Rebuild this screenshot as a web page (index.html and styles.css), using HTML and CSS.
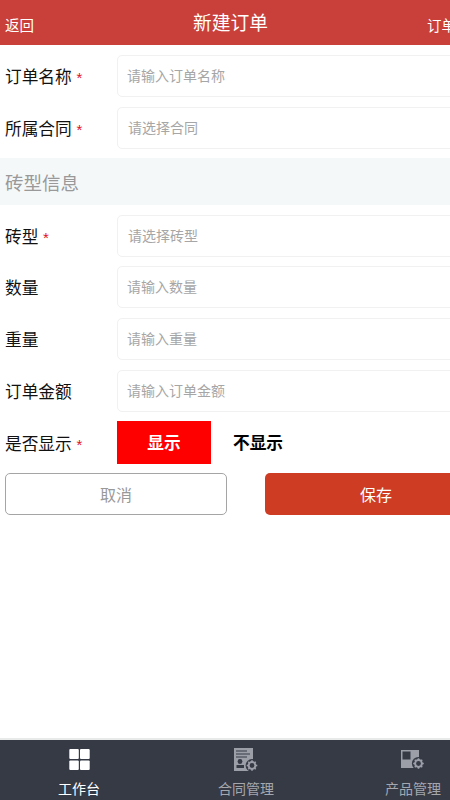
FILE: index.html
```html
<!DOCTYPE html>
<html lang="zh-CN">
<head>
    <meta charset="UTF-8">
    <meta name="viewport" content="width=device-width, initial-scale=1.0">
    <title>新建订单</title>
    <link rel="stylesheet" href="styles.css">
</head>
<body>
    <div class="page">
        <div class="header">
            <a class="back" href="#">返回</a>
            <div class="title">新建订单</div>
            <a class="orders" href="#">订单列表</a>
        </div>

        <div class="form">
            <div class="form-group">
                <label>订单名称 <span class="star">*</span></label>
                <input type="text" placeholder="请输入订单名称">
            </div>
            <div class="form-group select">
                <label>所属合同 <span class="star">*</span></label>
                <input type="text" placeholder="请选择合同">
            </div>

            <div class="section">砖型信息</div>

            <div class="form-group select">
                <label>砖型 <span class="star">*</span></label>
                <input type="text" placeholder="请选择砖型">
            </div>
            <div class="form-group tight">
                <label>数量</label>
                <input type="text" placeholder="请输入数量">
            </div>
            <div class="form-group">
                <label>重量</label>
                <input type="text" placeholder="请输入重量">
            </div>
            <div class="form-group">
                <label>订单金额</label>
                <input type="text" placeholder="请输入订单金额">
            </div>

            <div class="form-group toggle-row">
                <label>是否显示 <span class="star">*</span></label>
                <div class="toggle on">显示</div>
                <div class="toggle">不显示</div>
            </div>

            <div class="buttons">
                <button class="cancel">取消</button>
                <button class="save">保存</button>
            </div>
        </div>

        <div class="nav">
            <div class="nav-item active">
                <svg class="nav-icon" width="22" height="24" viewBox="0 0 22 24">
                    <rect x="1.3" y="1" width="9.5" height="10" rx="1" fill="#fff"/>
                    <rect x="12" y="1" width="9.7" height="10" rx="1" fill="#fff"/>
                    <rect x="1.3" y="12.5" width="9.5" height="9.5" rx="1" fill="#fff"/>
                    <rect x="12" y="12.5" width="9.7" height="9.5" rx="1" fill="#fff"/>
                </svg>
                <span>工作台</span>
            </div>
            <div class="nav-item">
                <svg class="nav-icon" width="24" height="24" viewBox="0 0 24 24">
                    <rect x="0" y="0" width="19" height="23" fill="#9c9ea8"/>
                    <path d="M2 3h11M2 6h14M2 9h11" stroke="#353a45" stroke-width="1.2"/>
                    <circle cx="6" cy="13.5" r="2.4" fill="#353a45"/>
                    <rect x="2.5" y="17" width="7.5" height="3" fill="#353a45"/>
                    <circle cx="18" cy="17.5" r="6.4" fill="#353a45"/>
                    <circle cx="18" cy="17.5" r="3.4" fill="none" stroke="#9c9ea8" stroke-width="2"/>
                    <path d="M18 12.2v2M18 20.8v2M12.7 17.5h2M21.3 17.5h2M14.3 13.8l1.4 1.4M20.3 19.8l1.4 1.4M14.3 21.2l1.4-1.4M20.3 15.2l1.4-1.4" stroke="#9c9ea8" stroke-width="1.6"/>
                </svg>
                <span>合同管理</span>
            </div>
            <div class="nav-item">
                <svg class="nav-icon" width="24" height="24" viewBox="0 0 24 24">
                    <rect x="0" y="2" width="18" height="18" fill="#9c9ea8"/>
                    <rect x="1.5" y="3.5" width="8" height="8" fill="#353a45"/>
                    <circle cx="17.5" cy="15.5" r="6.6" fill="#353a45"/>
                    <circle cx="17.5" cy="15.5" r="3.4" fill="none" stroke="#9c9ea8" stroke-width="2"/>
                    <path d="M17.5 10.2v2M17.5 18.8v2M12.2 15.5h2M20.8 15.5h2M13.8 11.8l1.4 1.4M19.8 17.8l1.4 1.4M13.8 19.2l1.4-1.4M19.8 13.2l1.4-1.4" stroke="#9c9ea8" stroke-width="1.6"/>
                </svg>
                <span>产品管理</span>
            </div>
        </div>
    </div>
</body>
</html>
```

FILE: styles.css
```css
html, body {
    margin: 0;
    height: 100%;
    overflow: hidden;
    background: #fff;
}
body {
    font-family: "Liberation Sans", "Noto Sans CJK SC", sans-serif;
}
.page {
    width: 450px;
    height: 800px;
    display: flex;
    flex-direction: column;
    overflow: hidden;
}
.header {
    flex: none;
    height: 45px;
    display: flex;
    align-items: center;
    padding-left: 5px;
    background: #c9403a;
    color: #fff;
    white-space: nowrap;
}
.header a {
    color: #fff;
    text-decoration: none;
    font-size: 14.5px;
    padding-top: 3px;
    flex: none;
}
.back {
    width: 188px;
}
.title {
    flex: none;
    width: 75px;
    font-size: 18.75px;
    margin-bottom: 3px;
}
.orders {
    margin-left: 159px;
}
.form {
    flex: 1;
    width: 480px;
}
.form-group {
    display: flex;
    align-items: center;
    height: 42px;
    margin-top: 10px;
    padding-left: 5px;
}
.form-group.tight {
    margin-top: 9px;
}
.form-group label {
    flex: none;
    width: 112px;
    font-size: 16.7px;
    color: #111;
}
.star {
    color: #e0101f;
    font-size: 15px;
}
.form-group input {
    flex: 1;
    min-width: 0;
    height: 42px;
    padding: 0 9px;
    border: 1px solid #f1f1f1;
    border-radius: 5px;
    box-sizing: border-box;
    font-family: inherit;
    font-size: 14px;
    outline: none;
}
.form-group.select input {
    padding-left: 10px;
}
.form-group input::placeholder {
    color: #a6a6a6;
}
.section {
    height: 45px;
    margin-top: 9px;
    padding: 2px 0 0 5px;
    line-height: 47px;
    background: #f5f8f9;
    color: #999;
    font-size: 18.5px;
}
.toggle-row {
    height: 43px;
    margin-top: 9px;
}
.toggle {
    width: 94px;
    height: 43px;
    line-height: 45px;
    text-align: center;
    font-size: 16.7px;
    font-weight: bold;
    color: #000;
}
.toggle.on {
    background: #ff0000;
    color: #fff;
}
.buttons {
    display: flex;
    margin-top: 9px;
    padding-left: 5px;
}
.buttons button {
    flex: none;
    height: 42px;
    border-radius: 5px;
    font-family: inherit;
    font-size: 16px;
    box-sizing: border-box;
}
.cancel {
    width: 222px;
    border: 1px solid #a5a5a5;
    background: #fff;
    color: #999;
}
.save {
    width: 222px;
    margin-left: 38px;
    border: none;
    background: #cd3c23;
    color: #fff;
}
.nav {
    flex: none;
    height: 62px;
    width: 501px;
    margin-left: -4.5px;
    box-sizing: border-box;
    display: grid;
    grid-template-columns: repeat(3, 167px);
    background: #353a45;
    border-top: 2px solid #e8eaea;
}
.nav-item {
    display: flex;
    flex-direction: column;
    align-items: center;
    color: #a5a7af;
    font-size: 14px;
}
.nav-item.active {
    color: #fff;
}
.nav-icon {
    margin-top: 8px;
}
.nav-item span {
    margin-top: 7px;
    line-height: 20px;
}
```
